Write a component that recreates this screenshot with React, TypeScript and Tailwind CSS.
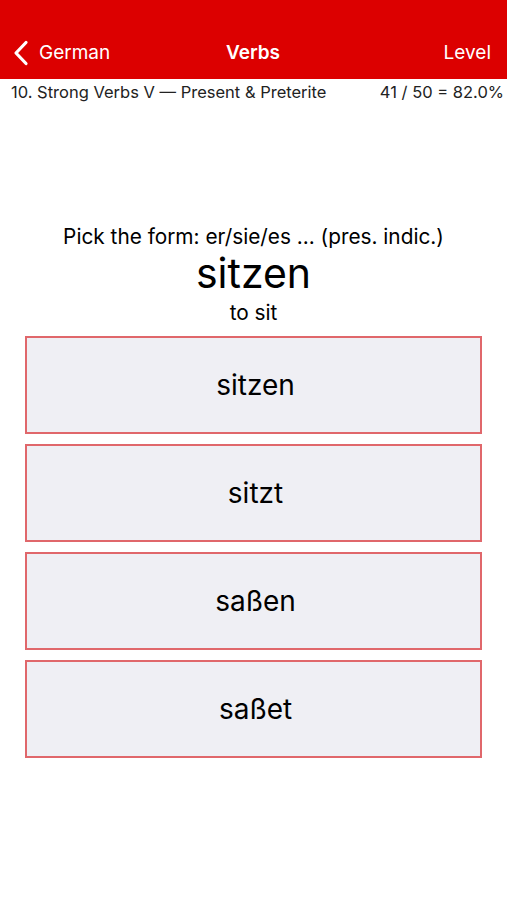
const options = ["sitzen", "sitzt", "saßen", "saßet"];

function ChevronLeft() {
  return (
    <svg width="16" height="26" viewBox="0 0 16 26" fill="none">
      <path d="M13 2.5 L3 13 L13 23.5" stroke="white" strokeWidth="3.2" strokeLinecap="round" strokeLinejoin="round" />
    </svg>
  );
}

export default function App() {
  return (
    <div className="w-[507px] h-[900px] bg-white text-black" style={{ fontFamily: 'Inter, "Liberation Sans", sans-serif' }}>
      <div className="bg-[#dc0000] h-[79px] pt-[38px] pl-[13px] pr-[14px] text-white">
        <div className="h-[30px] flex items-center justify-between relative">
          <div className="flex items-center gap-[10px]">
            <ChevronLeft />
            <span className="text-[19px]">German</span>
          </div>
          <span className="absolute left-0 right-0 text-center text-[19px] font-semibold pointer-events-none">Verbs</span>
          <span className="text-[19px] pr-[2px]">Level</span>
        </div>
      </div>
      <div className="flex justify-between items-center h-[26px] pl-[11px] pr-[3px] text-[16.5px] text-[#222]">
        <span>10. Strong Verbs V — Present &amp; Preterite</span>
        <span>41 / 50 = 82.0%</span>
      </div>
      <div className="pt-[119px] flex flex-col items-center">
        <div className="text-[20.8px] leading-[26px]">Pick the form: er/sie/es ... (pres. indic.)</div>
        <div className="text-[41px] leading-[42px] mt-[2px]">sitzen</div>
        <div className="text-[20.8px] leading-[28px] mt-[5px]">to sit</div>
      </div>
      <div className="flex flex-col gap-[10px] px-[25px] mt-[9px]">
        {options.map((o) => (
          <div key={o} className="h-[98px] bg-[#efeff4] border-2 border-[#e0676b] flex items-center justify-center pl-[4px] text-[28px]">
            {o}
          </div>
        ))}
      </div>
    </div>
  );
}
